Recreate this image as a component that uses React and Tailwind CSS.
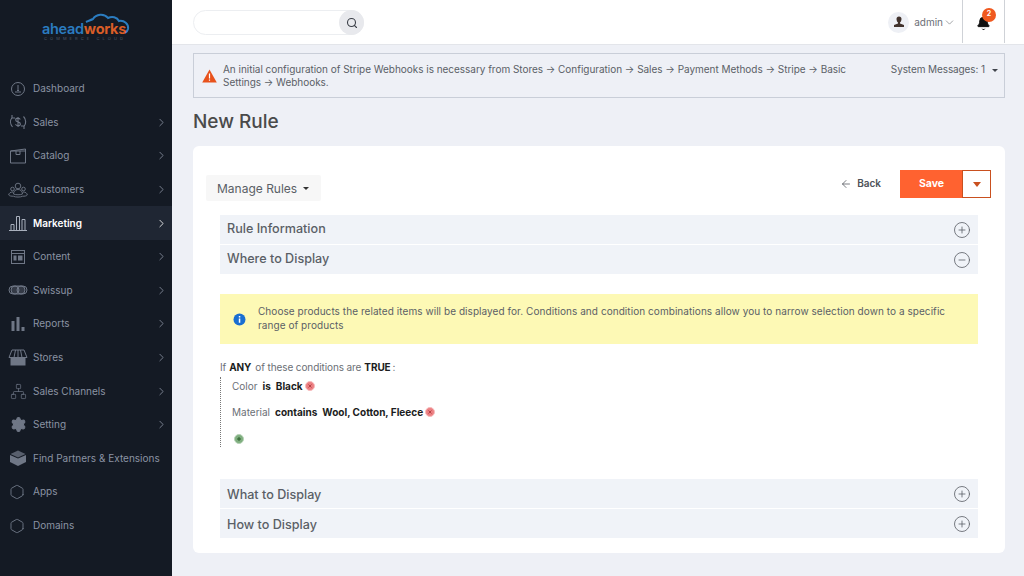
import { ChevronRight, ChevronDown, Search, ArrowLeft, CirclePlus, CircleMinus, Hexagon, Settings, Network, Bell } from "lucide-react";

const font = { fontFamily: "Inter, 'Noto Sans', sans-serif" };

function DashIcon() {
  return (
    <svg width="18" height="18" viewBox="0 0 18 18" fill="none" stroke="currentColor" strokeWidth="1">
      <circle cx="9" cy="9" r="6.5" />
      <path d="M9 5v5M6 12h6M8 10.500h2" />
    </svg>
  );
}
function SalesIcon() {
  return (
    <svg width="20" height="20" viewBox="0 0 20 20" fill="none" stroke="currentColor" strokeWidth="1.100">
      <path d="M4 5.500A7.500 7.500 0 0 0 4.500 15M15.500 4.500A7.500 7.500 0 0 1 16 14.500M4 3v3h3M16 17v-3h-3" />
      <path d="M12.300 7.500c-.5-1-1.300-1.400-2.300-1.400-1.400 0-2.300.8-2.300 1.800 0 2.600 4.700 1.400 4.700 4 0 1.100-1 1.900-2.400 1.900-1.100 0-2-.5-2.500-1.500M10 5v10" />
    </svg>
  );
}
function CatalogIcon() {
  return (
    <svg width="18" height="16" viewBox="0 0 18 16" fill="none" stroke="currentColor" strokeWidth="1">
      <path d="M1.500 3L16.500 1v14h-15zM1.500 3h15M7 3v3.500h4V3" />
    </svg>
  );
}
function CustomersIcon() {
  return (
    <svg width="20" height="16" viewBox="0 0 20 16" fill="none" stroke="currentColor" strokeWidth="0.900">
      <circle cx="10" cy="4" r="2.800" />
      <path d="M5.500 12c0-3 2-4.500 4.500-4.500s4.500 1.500 4.500 4.500c-1.500 1-7.500 1-9 0z" />
      <circle cx="4.500" cy="7" r="1.800" />
      <circle cx="15.500" cy="7" r="1.800" />
      <path d="M5 10c-2.500 0-4 1-4.300 3 .7 1 2.800 1.300 4.800 1.200M15 10c2.500 0 4 1 4.300 3-.7 1-2.800 1.300-4.800 1.200M5.500 14.300c2 1 7 1 9 0" />
    </svg>
  );
}
function MarketingIcon() {
  return (
    <svg width="20" height="18" viewBox="0 0 20 18" fill="none" stroke="currentColor" strokeWidth="1">
      <path d="M1 16.500h18M3 16.500v-6h3v6M8.500 16.500v-14h3v14M14 16.500v-11h3v11" />
    </svg>
  );
}
function ContentIcon() {
  return (
    <svg width="16" height="16" viewBox="0 0 16 16" fill="none" stroke="currentColor" strokeWidth="1">
      <rect x="1.500" y="1.500" width="13" height="13" />
      <path d="M1.500 4.500h13" />
      <path d="M3.500 6.500h3v5h-3zM8 6.500h4.500v5H8z" fill="currentColor" stroke="none" />
    </svg>
  );
}
function SwissupIcon() {
  return (
    <svg width="20" height="12" viewBox="0 0 20 12" fill="none" stroke="currentColor" strokeWidth="1">
      <rect x="1" y="2" width="18" height="8" rx="4" />
      <circle cx="7" cy="6" r="4" fill="currentColor" fillOpacity="0.35" />
      <circle cx="13" cy="6" r="4" fill="currentColor" fillOpacity="0.35" />
    </svg>
  );
}
function ReportsIcon() {
  return (
    <svg width="14" height="16" viewBox="0 0 14 16" fill="currentColor">
      <path d="M0.500 5h3v10h-3zM5.500 1h3v14h-3zM10.500 11h3v4h-3z" />
    </svg>
  );
}
function StoresIcon() {
  return (
    <svg width="20" height="17" viewBox="0 0 20 17" fill="none" stroke="currentColor" strokeWidth="1">
      <path d="M4 1h12l3 7.500H1zM7.500 1L6 8.500M10 1v7.500M12.500 1L14 8.500" />
      <path d="M2.500 9h15v7.500h-15z" fill="currentColor" stroke="none" />
    </svg>
  );
}
function BrickIcon() {
  return (
    <svg width="18" height="18" viewBox="0 0 18 18" fill="currentColor">
      <path d="M1 6l8 3.500 8-3.500v7l-8 4-8-4z" />
      <path d="M9 1.500L16.500 5 9 8.500 1.500 5z" opacity="0.75" />
    </svg>
  );
}

const menu = [
  { label: "Dashboard", icon: <DashIcon /> },
  { label: "Sales", icon: <SalesIcon />, arrow: true },
  { label: "Catalog", icon: <CatalogIcon />, arrow: true },
  { label: "Customers", icon: <CustomersIcon />, arrow: true },
  { label: "Marketing", icon: <MarketingIcon />, arrow: true, active: true },
  { label: "Content", icon: <ContentIcon />, arrow: true },
  { label: "Swissup", icon: <SwissupIcon />, arrow: true },
  { label: "Reports", icon: <ReportsIcon />, arrow: true },
  { label: "Stores", icon: <StoresIcon />, arrow: true },
  { label: "Sales Channels", icon: <Network size={17} strokeWidth={1} />, arrow: true },
  { label: "Setting", icon: <Settings size={17} fill="currentColor" strokeWidth={1.500} />, arrow: true },
  { label: "Find Partners & Extensions", icon: <BrickIcon /> },
  { label: "Apps", icon: <Hexagon size={16} strokeWidth={1.400} className="-ml-[3px]" /> },
  { label: "Domains", icon: <Hexagon size={16} strokeWidth={1.400} className="-ml-[3px]" /> },
];

function Sidebar() {
  return (
    <aside className="w-[172px] h-[576px] shrink-0 bg-[#141a24] flex flex-col">
      <div className="h-[72px] flex flex-col items-center pt-[11px] pr-[2px]">
        <div className="relative h-[24px] w-[86px]">
          <svg className="absolute left-[42px] top-0" width="46" height="24" viewBox="0 0 46 24" fill="none" stroke="#2b7cc0" strokeWidth="2">
            <path d="M2 11c2-1 5-2 7-3 3-5 11-6 15-1 4-2 9-1 11 3 5-1 10 3 9 8-.5 2-1.500 3-3 4" />
          </svg>
          <div className="absolute left-0 bottom-0 text-[14.500px] leading-[13px] font-bold tracking-[-0.3px] whitespace-nowrap">
            <span className="text-[#2b7cc0] font-semibold">ahead</span>
            <span className="text-[#d95d27]">works</span>
          </div>
        </div>
        <div className="text-[4px] leading-[5px] tracking-[3.100px] text-[#4f5866] mt-[1px] whitespace-nowrap">COMMERCE CLOUD</div>
      </div>
      {menu.map((item) => (
        <div
          key={item.label}
          className={`h-[33.600px] flex items-center pl-[7px] pr-[4px] ${item.active ? "bg-[#1f2633] text-white font-semibold" : "text-[#8b93a3]"}`}
        >
          <div className={`w-[22px] mr-[4px] flex justify-center ${item.active ? "text-[#a9b0bd]" : "text-[#6f7786]"}`}>{item.icon}</div>
          <span className="text-[10px] whitespace-nowrap">{item.label}</span>
          {item.arrow && <ChevronRight size={13} strokeWidth={1.500} className="ml-auto" />}
        </div>
      ))}
    </aside>
  );
}

function Header() {
  return (
    <header className="h-[45px] bg-white border-b border-[#e3e5ea] flex items-stretch pl-[21px] pr-[19px]">
      <div className="mt-[10px] h-[25px] w-[171px] rounded-full border border-[#eceef1] flex justify-end">
        <div className="w-[25px] h-[25px] -mt-[1px] -mr-[1px] rounded-full bg-[#e8e9ed] flex items-center justify-center">
          <Search size={12} strokeWidth={2.200} className="text-[#3a3f47]" />
        </div>
      </div>
      <div className="ml-auto flex items-center">
        <div className="w-[21px] h-[21px] rounded-full bg-[#eef0f5] flex items-center justify-center mr-[5px]">
          <svg width="12" height="12" viewBox="0 0 12 12" fill="#41322c">
            <path d="M6 0.500a2.500 2.500 0 0 1 2.500 2.500c0 1.500-.8 3-1.500 3.500v1l4 1.500v2H1v-2l4-1.500v-1c-.7-.5-1.500-2-1.500-3.500A2.500 2.500 0 0 1 6 .5z" />
          </svg>
        </div>
        <span className="text-[10px] text-[#6b6f76]">admin</span>
        <ChevronDown size={13} strokeWidth={1} className="text-[#55595f] mr-[6px]" />
        <div className="w-[43px] h-[43px] -mt-[2px] border-x border-[#cfd2d7] flex items-center justify-center relative">
          <Bell size={15} fill="#111" strokeWidth={1.500} className="text-[#111] mt-[5px]" />
          <span className="absolute left-[19px] top-[8px] w-[14px] h-[14px] rounded-full bg-[#f0591f] text-white text-[7px] font-bold flex items-center justify-center">2</span>
        </div>
      </div>
    </header>
  );
}

function AccordionRow({ title, open, low }) {
  const Icon = open ? CircleMinus : CirclePlus;
  return (
    <div className="h-[29px] bg-[#f0f3f8] flex items-center justify-between pl-[7px] pr-[7px]">
      <span className={`text-[12.600px] font-medium text-[#5a5f66] ${low ? "pt-[3px]" : "pb-[1px]"}`}>{title}</span>
      <Icon size={18} strokeWidth={1.100} className="text-[#5d6168]" />
    </div>
  );
}

function RedDot() {
  return (
    <svg className="ml-[2px]" width="10" height="10" viewBox="0 0 10 10">
      <circle cx="5" cy="5" r="4.500" fill="#ec7f82" stroke="#f6bcbd" />
      <path d="M3.500 3.500l3 3M6.500 3.500l-3 3" stroke="#a83236" strokeWidth="0.800" />
    </svg>
  );
}

function GreenDot() {
  return (
    <svg className="ml-[2px]" width="10" height="10" viewBox="0 0 10 10">
      <circle cx="5" cy="5" r="4.500" fill="#7fae7f" stroke="#b5d2b5" />
      <path d="M5 3v4M3 5h4" stroke="#255a25" strokeWidth="0.900" />
    </svg>
  );
}

export default function App() {
  return (
    <div className="flex w-[1024px] h-[576px] overflow-hidden bg-[#eef0f6]" style={font}>
      <Sidebar />
      <main className="flex-1 flex flex-col min-w-0">
        <Header />
        <div className="mt-[8px] ml-[21px] mr-[19px] h-[45px] border border-[#c9ced8] bg-[#eef0f6] flex pl-[8px] pr-[6px]">
          <svg className="mt-[15px] shrink-0" width="15" height="14" viewBox="0 0 15 14">
            <path d="M7.500 0.500L14.800 13.500H0.200z" fill="#e8521c" />
            <path d="M6.900 4.500h1.200v5H6.900zM6.900 10.500h1.200v1.300H6.900z" fill="#fff" />
          </svg>
          <p className="ml-[6px] mt-[9px] w-[640px] text-[10px] leading-[13px] tracking-[-0.030px] text-[#5b5f66]">
            An initial configuration of Stripe Webhooks is necessary from Stores → Configuration → Sales → Payment Methods → Stripe → Basic Settings → Webhooks.
          </p>
          <div className="ml-auto mt-[9px] flex items-start text-[10px] leading-[13px] tracking-[-0.100px] text-[#5b5f66]">
            System Messages: 1
            <span className="ml-[7px] mt-[6px] w-0 h-0 border-x-[3px] border-x-transparent border-t-[3px] border-t-[#41454c]" />
          </div>
        </div>
        <h1 className="ml-[21px] mt-[10px] text-[19px] leading-[27px] font-medium text-[#4a4a4a]">New Rule</h1>
        <section className="mt-[11px] ml-[21px] mr-[19px] h-[407px] rounded-[6px] bg-white pt-[24px] pl-[13px] pr-[14px]">
          <div className="flex justify-between h-[31px]">
            <div className="mt-[5px] w-[115px] h-[26px] pt-[1px] bg-[#f7f7f7] rounded-[2px] flex items-center pl-[11px] text-[12px] text-[#5a5f66]">
              Manage Rules
              <span className="ml-[6px] w-0 h-0 border-x-[3px] border-x-transparent border-t-[3px] border-t-[#333]" />
            </div>
            <div className="flex items-start">
              <div className="mt-[6px] mr-[19px] flex items-center text-[10px] font-semibold text-[#4e5258]">
                <ArrowLeft size={12} strokeWidth={1.500} className="mr-[5px]" />
                Back
              </div>
              <div className="w-[62px] h-[28px] pb-[1px] pl-[1px] bg-[#ff6230] text-white text-[10.500px] font-bold flex items-center justify-center">Save</div>
              <div className="w-[29px] h-[28px] border border-[#c9501f] bg-white flex items-center justify-center">
                <span className="w-0 h-0 border-x-[4px] border-x-transparent border-t-[5px] border-t-[#c9501f]" />
              </div>
            </div>
          </div>
          <div className="ml-[14px] mr-[13px] mt-[14px]">
            <div className="flex flex-col gap-[1px]">
              <AccordionRow title="Rule Information" />
              <AccordionRow title="Where to Display" open />
            </div>
            <div className="mt-[20px] h-[50px] bg-[#fdf9b5] flex items-center pl-[13px] pr-[20px]">
              <svg className="shrink-0" width="13" height="13" viewBox="0 0 13 13">
                <circle cx="6.500" cy="6.500" r="6" fill="#1a6fd1" />
                <path d="M5.800 5.500h1.500v4.300H5.800zM5.800 3h1.500v1.500H5.800z" fill="#fff" />
              </svg>
              <p className="ml-[12px] pb-[2px] text-[10px] leading-[14px] tracking-[0.060px] text-[#5b5f66]">
                Choose products the related items will be displayed for. Conditions and condition combinations allow you to narrow selection down to a specific range of products
              </p>
            </div>
            <div className="mt-[16px] text-[10px] text-[#6b6f76]">
              <div className="h-[14px] flex items-center tracking-[-0.100px]">
                If <b className="ml-[3px] text-[#1b1d21]">ANY</b>
                <span className="ml-[4px]">of these conditions are</span>
                <b className="ml-[3px] text-[#1b1d21]">TRUE</b>
                <span className="ml-[2px]">:</span>
              </div>
              <div className="mt-[3px] h-[70px] border-l border-dotted border-[#777] pl-[11px] flex flex-col">
                <div className="mt-[2px] h-[14px] flex items-center">
                  Color <b className="ml-[5px] text-[#1b1d21]">is</b>
                  <b className="ml-[5px] text-[#1b1d21]">Black</b>
                  <RedDot />
                </div>
                <div className="mt-[12px] h-[14px] flex items-center">
                  Material <b className="ml-[5px] text-[#1b1d21]">contains</b>
                  <b className="ml-[5px] text-[#1b1d21]">Wool, Cotton, Fleece</b>
                  <RedDot />
                </div>
                <div className="mt-[15px]"><GreenDot /></div>
              </div>
            </div>
            <div className="mt-[32px] flex flex-col gap-[1px]">
              <AccordionRow title="What to Display" low />
              <AccordionRow title="How to Display" low />
            </div>
          </div>
        </section>
      </main>
    </div>
  );
}
